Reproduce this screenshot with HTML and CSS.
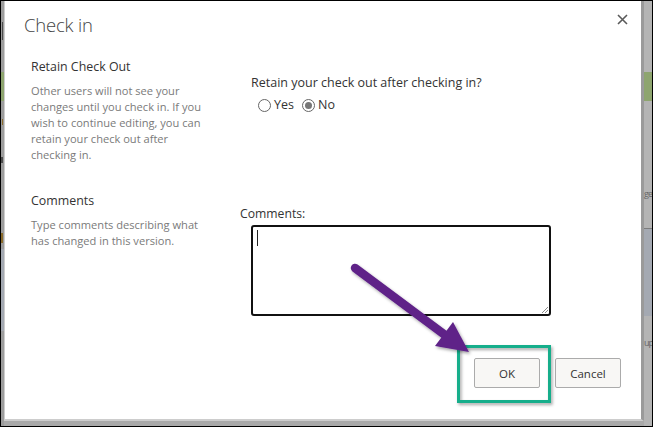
FILE: index.html
```html
<!DOCTYPE html>
<html lang="en">
<head>
<meta charset="utf-8">
<title>Check in</title>
<link rel="stylesheet" href="styles.css">
</head>
<body>
<div class="screen">
  <div class="bg-left">
    <span class="frag dark f1"></span>
    <span class="frag green f2"></span>
    <span class="frag brown f3"></span>
    <span class="frag dark f4"></span>
    <span class="frag brown f5"></span>
    <span class="frag slate f6"></span>
  </div>
  <div class="dialog">
    <div class="dlg-header">
      <h1 class="dlg-title">Check in</h1>
      <svg class="close" width="11" height="11" viewBox="0 0 11 11"><path d="M1 1 L10 10 M10 1 L1 10" stroke="#5a5a5a" stroke-width="1.6" fill="none"/></svg>
    </div>
    <div class="dlg-body">
      <div class="cell left">
        <div class="sec-label">Retain Check Out</div>
        <div class="sec-desc">Other users will not see your<br>changes until you check in. If you<br>wish to continue editing, you can<br>retain your check out after<br>checking in.</div>
      </div>
      <div class="cell right r1">
        <div class="question">Retain your check out after checking in?</div>
        <div class="radios">
          <span class="radio"></span><span class="radio-text">Yes</span>
          <span class="radio checked"></span><span class="radio-text">No</span>
        </div>
      </div>
      <div class="cell left">
        <div class="sec-label">Comments</div>
        <div class="sec-desc">Type comments describing what<br>has changed in this version.</div>
      </div>
      <div class="cell right r2">
        <div class="field-label">Comments:</div>
        <div class="textarea">
          <span class="caret"></span>
          <svg class="grip" width="9" height="9" viewBox="0 0 9 9"><path d="M8 2 L2 8 M8 5 L5 8" stroke="#8a8a8a" stroke-width="1" fill="none"/></svg>
        </div>
      </div>
    </div>
    <div class="dlg-footer">
      <button class="btn">OK</button>
      <button class="btn">Cancel</button>
    </div>
  </div>
  <div class="bg-right">
    <span class="frag green g1"></span>
    <span class="frag-text g2">ge</span>
    <span class="frag slate g3"></span>
    <span class="frag-text g4">up</span>
  </div>
  <svg class="annot" width="653" height="427" viewBox="0 0 653 427">
    <defs>
      <filter id="sh" x="-20%" y="-20%" width="140%" height="140%">
        <feDropShadow dx="1.5" dy="2" stdDeviation="1.8" flood-color="#000" flood-opacity="0.35"/>
      </filter>
    </defs>
    <rect x="458.5" y="346.5" width="91" height="55" fill="none" stroke="#19ae8b" stroke-width="3" filter="url(#sh)"/>
    <g filter="url(#sh)">
      <line x1="355" y1="268" x2="445" y2="335" stroke="#5f2488" stroke-width="8.5" stroke-linecap="round"/>
      <polygon points="435,346 453,322 469,352" fill="#5f2488"/>
    </g>
  </svg>
</div>
</body>
</html>
```
FILE: styles.css
```css
* { box-sizing: border-box; }
html, body { margin: 0; padding: 0; background: #fff; }
body { font-family: "Open Sans", "Noto Sans", sans-serif; }

.screen {
  position: relative;
  width: 653px;
  height: 427px;
  border: 1px solid #000;
  background: #a9a9a9;
  display: flex;
  align-items: flex-start;
  overflow: hidden;
}

.bg-left {
  width: 3px;
  height: 425px;
  background: #9d9d9d;
  display: flex;
  flex-direction: column;
}
.bg-right {
  width: 8px;
  height: 425px;
  background: #b4b4b4;
  display: flex;
  flex-direction: column;
}
.frag { display: block; }
.frag.dark { background: #4b4b4b; }
.frag.green { background: #8ea56f; }
.frag.brown { background: #8a6a2a; }
.frag.slate { background: #a4a9b2; }
.f1 { margin-top: 21px; height: 18px; width: 1px; margin-left: 1px; }
.f2 { margin-top: 32px; height: 29px; }
.f3 { margin-top: 18px; height: 6px; width: 1px; margin-left: 1px; }
.f4 { margin-top: 32px; height: 6px; width: 2px; }
.f5 { margin-top: 70px; height: 10px; width: 2px; }
.f6 { margin-top: 6px; height: 82px; }

.g1 { margin-top: 71px; height: 29px; }
.g2 { margin-top: 86px; font-size: 9px; letter-spacing: -1px; line-height: 14px; color: #666; }
.g3 { margin-top: 27px; height: 88px; border-top: 1px solid #7d7d7d; }
.g4 { margin-top: 20px; font-size: 9px; letter-spacing: -1px; line-height: 14px; color: #666; }
.frag-text { display: block; white-space: nowrap; width: 8px; }

.dialog {
  width: 640px;
  height: 420px;
  background: #fff;
  border-left: 1px solid #cdcdcd;
  border-bottom: 2px solid #cdcdcd;
  border-right: 3px solid #9a9a9a;
  display: flex;
  flex-direction: column;
}

.dlg-header {
  display: flex;
  justify-content: space-between;
  align-items: flex-start;
  padding: 9px 13px 0 19px;
  height: 37px;
}
.dlg-title {
  margin: 0;
  font-size: 18.5px;
  font-weight: 300;
  letter-spacing: -0.2px;
  line-height: 30px;
  color: #444;
}
.close { margin-top: 4px; }

.dlg-body {
  display: grid;
  grid-template-columns: 209px 1fr;
  row-gap: 29px;
  padding: 20px 0 0 26px;
}
.sec-label {
  font-size: 12.4px;
  line-height: 18px;
  color: #333;
}
.sec-desc {
  margin-top: 7px;
  font-size: 11.1px;
  line-height: 16px;
  color: #7a7a7a;
  white-space: nowrap;
}
.right { padding-left: 11px; }
.r1 { padding-top: 16px; }
.question {
  font-size: 12.5px;
  line-height: 18px;
  color: #333;
}
.radios {
  display: flex;
  align-items: center;
  margin-top: 6px;
  margin-left: 7px;
  font-size: 12.5px;
  line-height: 14px;
  color: #333;
}
.radio {
  width: 13px;
  height: 13px;
  border: 1px solid #666;
  border-radius: 50%;
  background: #fff;
  display: inline-flex;
  align-items: center;
  justify-content: center;
}
.radio.checked::after {
  content: "";
  width: 7px;
  height: 7px;
  border-radius: 50%;
  background: #777;
}
.radio-text { margin-left: 3px; margin-right: 8px; }

.r2 { padding-top: 13px; margin-left: -11px; }
.field-label {
  font-size: 12.2px;
  line-height: 18px;
  color: #333;
}
.textarea {
  position: relative;
  margin-top: 2px;
  margin-left: 11px;
  width: 300px;
  height: 91px;
  border: 2px solid #111;
  border-radius: 3px;
  padding: 3px 0 0 4px;
}
.caret {
  display: block;
  width: 1px;
  height: 16px;
  background: #222;
}
.grip { position: absolute; right: 0; bottom: 0; }

.dlg-footer {
  display: flex;
  justify-content: flex-end;
  gap: 15px;
  padding: 42px 20px 0 0;
}
.btn {
  width: 66px;
  height: 30px;
  border: 1px solid #ababab;
  border-radius: 2px;
  background: #f8f7f5;
  font-family: "Open Sans", "Noto Sans", sans-serif;
  font-size: 11.5px;
  color: #333;
  padding: 0;
}

.annot { position: absolute; left: -1px; top: -1px; pointer-events: none; }
```
